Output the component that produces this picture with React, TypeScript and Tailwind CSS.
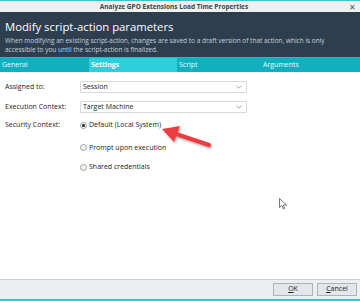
import React from 'react';

const font = { fontFamily: '"Open Sans", "Noto Sans", sans-serif' };

const tabs = [
  { label: 'General', width: 'w-[89px]' },
  { label: 'Settings', width: 'w-[88px]', active: true },
  { label: 'Script', width: 'w-[84px]' },
  { label: 'Arguments', width: 'w-[95px]' },
];

function Select({ value }: { value: string }) {
  return (
    <div className="flex h-[12px] w-[167px] items-center justify-between rounded-[1px] border border-[#d5d9dc] bg-white pl-[2px] pr-[4px] text-[7px] text-[#222]">
      <span>{value}</span>
      <svg width="6" height="4" viewBox="0 0 6 4">
        <path d="M0.5 0.8 L3 3.2 L5.5 0.8" fill="none" stroke="#8a9096" strokeWidth="0.8" />
      </svg>
    </div>
  );
}

function Radio({ label, checked }: { label: string; checked?: boolean }) {
  return (
    <div className="flex items-center gap-[2px] text-[7px] text-[#222]">
      <span className="flex h-[7px] w-[7px] items-center justify-center rounded-full border border-[#9aa0a6] bg-[#f3f4f5]">
        {checked && <span className="h-[3px] w-[3px] rounded-full bg-[#222]" />}
      </span>
      <span>{label}</span>
    </div>
  );
}

export default function App() {
  return (
    <div style={font} className="relative flex h-[301px] w-[360px] flex-col overflow-hidden border-t border-[#3fc3cf] bg-white">
      {/* title bar */}
      <div className="relative flex h-[11px] items-center justify-center bg-[#f0f0f0]">
        <span className="mr-[12px] text-[6.5px] font-bold text-[#444]">Analyze GPO Extensions Load Time Properties</span>
        <span className="absolute right-[4px] top-[1px] text-[8px] leading-[9px] text-[#555]">✕</span>
      </div>

      {/* header */}
      <div className="h-[45px] bg-[#2d3e4f] px-[5px] pt-[7px]">
        <h1 className="text-[11.3px] leading-[15px] text-white">Modify script-action parameters</h1>
        <p className="mt-[2px] text-[6.5px] leading-[9px] text-[#c9d1d8]">
          When modifying an existing script-action, changes are saved to a draft version of that action, which is only
          <br />
          accessible to you until the script-action is finalized.
        </p>
      </div>

      {/* tabs */}
      <div className="flex h-[15px] border-t border-[#27b9c8] bg-[#12b0bf]">
        {tabs.map((t) => (
          <div
            key={t.label}
            className={`${t.width} flex items-center px-[2px] text-[7px] ${
              t.active ? 'bg-[#2ccfdc] font-bold text-white' : 'text-[#e8fbfd]'
            }`}
          >
            {t.label}
          </div>
        ))}
      </div>

      {/* content */}
      <div className="flex flex-1 flex-col pl-[5px] pt-[9px] text-[7px] text-[#222]">
        <div className="flex items-center">
          <span className="w-[75px]">Assigned to:</span>
          <Select value="Session" />
        </div>
        <div className="mt-[8px] flex items-center">
          <span className="w-[75px]">Execution Context:</span>
          <Select value="Target Machine" />
        </div>
        <div className="mt-[7px] flex">
          <span className="w-[75px]">Security Context:</span>
          <div className="flex flex-col">
            <Radio label="Default (Local System)" checked />
            <div className="mt-[12px]">
              <Radio label="Prompt upon execution" />
            </div>
            <div className="mt-[9px]">
              <Radio label="Shared credentials" />
            </div>
          </div>
        </div>
      </div>

      {/* footer */}
      <div className="flex h-[20px] items-center justify-end gap-[4px] border-t border-[#c9cfd4] bg-[#eceff2] pr-[3px]">
        <button className="h-[13px] w-[40px] border border-[#adb3b8] bg-[#e4e7ea] text-[7px] text-[#222]">
          <span className="underline">O</span>K
        </button>
        <button className="h-[13px] w-[40px] border border-[#adb3b8] bg-[#e4e7ea] text-[7px] text-[#222]">
          <span className="underline">C</span>ancel
        </button>
      </div>
      <div className="h-[2px] bg-[#3fc3cf]" />

      {/* red annotation arrow */}
      <svg className="absolute left-[150px] top-[118px]" width="70" height="36" viewBox="0 0 70 36">
        <defs>
          <filter id="sh" x="-20%" y="-20%" width="140%" height="160%">
            <feDropShadow dx="1" dy="1.5" stdDeviation="1" floodColor="#000" floodOpacity="0.35" />
          </filter>
        </defs>
        <g filter="url(#sh)">
          <line x1="59" y1="26" x2="26" y2="15" stroke="#ee3b3f" strokeWidth="4" strokeLinecap="round" />
          <polygon points="12,10 30,7 24,23" fill="#ee3b3f" />
        </g>
      </svg>

      {/* mouse cursor */}
      <svg className="absolute left-[279px] top-[197px]" width="9" height="12" viewBox="0 0 9 12">
        <path d="M0.5 0.5 L0.5 9.5 L2.8 7.5 L4.3 11 L5.6 10.4 L4.2 7 L7.5 7 Z" fill="white" stroke="#555" strokeWidth="0.8" />
      </svg>
    </div>
  );
}
